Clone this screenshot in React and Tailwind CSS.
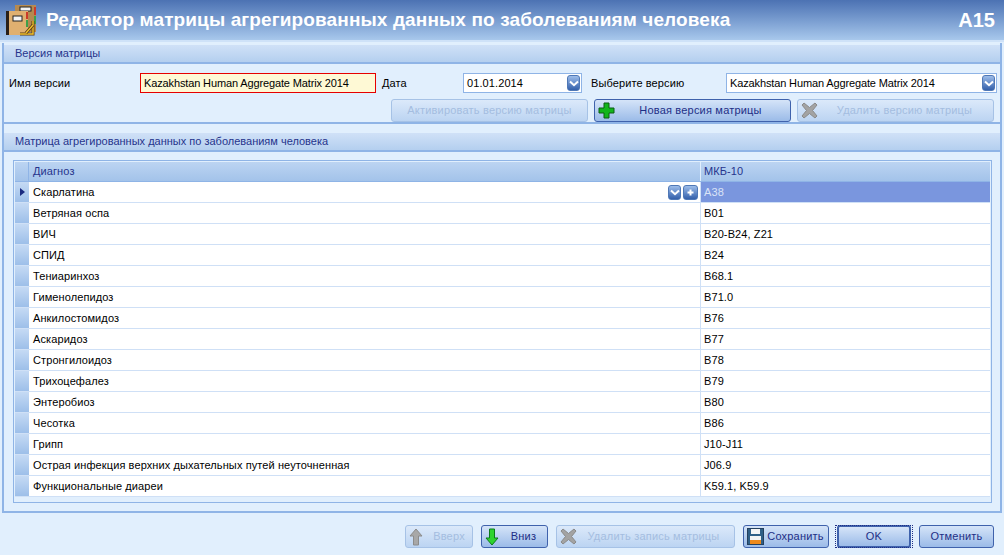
import React from "react";

const rows = [
  ["Скарлатина", "A38"],
  ["Ветряная оспа", "B01"],
  ["ВИЧ", "B20-B24, Z21"],
  ["СПИД", "B24"],
  ["Тениаринхоз", "B68.1"],
  ["Гименолепидоз", "B71.0"],
  ["Анкилостомидоз", "B76"],
  ["Аскаридоз", "B77"],
  ["Стронгилоидоз", "B78"],
  ["Трихоцефалез", "B79"],
  ["Энтеробиоз", "B80"],
  ["Чесотка", "B86"],
  ["Грипп", "J10-J11"],
  ["Острая инфекция верхних дыхательных путей неуточненная", "J06.9"],
  ["Функциональные диареи", "K59.1, K59.9"],
];

const ChevronBox = ({ className }) => (
  <div className={`flex items-center justify-center rounded-[3px] border border-[#4f78b6] bg-gradient-to-b from-[#9dbdea] to-[#3460aa] ${className}`}>
    <svg width="10" height="7" viewBox="0 0 10 7">
      <path d="M1 1.5 L5 5.2 L9 1.5" fill="none" stroke="#fff" strokeWidth="2" />
    </svg>
  </div>
);

const PlusIcon = () => (
  <svg width="17" height="17" viewBox="0 0 17 17">
    <path d="M6 1h5v5h5v5h-5v5H6v-5H1V6h5z" fill="#12b51c" stroke="#0a5c12" strokeWidth="1" />
  </svg>
);

const CrossIcon = () => (
  <svg width="17" height="17" viewBox="0 0 17 17">
    <path d="M3 1 L8.5 5.5 L14 1 L16 3 L11.5 8.5 L16 14 L14 16 L8.5 11.5 L3 16 L1 14 L5.5 8.5 L1 3 Z" fill="#a3a3a3" stroke="#8a8a8a" strokeWidth="1" />
  </svg>
);

const UpIcon = () => (
  <svg width="14" height="18" viewBox="0 0 14 18">
    <path d="M7 1 L13 8 H9.5 V17 H4.5 V8 H1 Z" fill="#a8a8a8" stroke="#8c8c8c" />
  </svg>
);

const DownIcon = () => (
  <svg width="14" height="18" viewBox="0 0 14 18">
    <path d="M7 17 L13 10 H9.5 V1 H4.5 V10 H1 Z" fill="#2fd42f" stroke="#0b7a1a" />
  </svg>
);

const SaveIcon = () => (
  <svg width="17" height="17" viewBox="0 0 17 17">
    <rect x="0.5" y="0.5" width="16" height="16" fill="#2f5f86" stroke="#24405e" />
    <rect x="4" y="1" width="9" height="5" fill="#f4f4f4" />
    <rect x="3" y="8" width="11" height="4" fill="#f2f2f2" />
    <rect x="3" y="12" width="11" height="4" fill="#ef8a1c" />
  </svg>
);

const Btn = ({ children, icon, disabled, className = "", textClass = "" }) => (
  <button
    className={`relative flex h-[23px] items-center justify-center rounded-[3px] border bg-gradient-to-b tracking-[0.2px] ${
      disabled
        ? "border-[#a6c2e6] from-[#dbe9fa] to-[#bcd4f2] text-[#a4bde0]"
        : "border-[#3f62ac] from-[#d5e4f8] to-[#9bbbe8] text-[#1e2f86]"
    } ${className}`}
  >
    {icon && <span className="absolute left-[3px] top-[2px] flex">{icon}</span>}
    <span className={textClass}>{children}</span>
  </button>
);

const Band = ({ children }) => (
  <div className="flex h-[19px] items-center border-b-2 border-[#8fb4e6] bg-gradient-to-b from-[#d0e1f7] to-[#b4cfef] pl-[11px] tracking-normal text-[#26348c]">
    {children}
  </div>
);

const App = () => {
  return (
    <div
      className="flex h-[555px] w-[1004px] flex-col overflow-hidden bg-[#e1effd] text-[11px] tracking-[0.1px] text-black"
      style={{ fontFamily: '"Liberation Sans", Arial, sans-serif' }}
    >
      {/* Title */}
      <div className="flex h-[40px] items-center bg-gradient-to-b from-[#4c72b3] to-[#a8c8ec] pl-[6px] pr-[9px]">
        <svg width="32" height="32" viewBox="0 0 32 32" className="mr-[8px]">
          <rect x="9" y="1" width="21" height="27" fill="#b58a50" />
          <rect x="14" y="3" width="11" height="4" fill="#f2f2f2" stroke="#222" />
          <rect x="28" y="3" width="2" height="8" fill="#cc3a2a" />
          <rect x="28" y="12" width="2" height="8" fill="#3ea04a" />
          <rect x="0" y="7" width="3" height="24" fill="#2a2018" />
          <rect x="3" y="7" width="19" height="24" fill="#e0b070" />
          <rect x="7" y="12" width="9" height="5" fill="#f4f4f4" stroke="#222" />
          <rect x="20" y="8" width="2" height="7" fill="#cc3a2a" />
          <rect x="20" y="16" width="2" height="7" fill="#3ea04a" />
          <path d="M14 30 H27 V17" fill="none" stroke="#5a3a10" strokeWidth="3" />
          <path d="M14 30 H27 V17" fill="none" stroke="#f2c230" strokeWidth="1.4" />
          <path d="M20 29 L27 21" fill="none" stroke="#5a3a10" strokeWidth="3" />
          <path d="M20 29 L27 21" fill="none" stroke="#f2c230" strokeWidth="1.4" />
        </svg>
        <div className="flex-1 text-[19px] font-bold tracking-[0.12px] text-white">
          Редактор матрицы агрегированных данных по заболеваниям человека
        </div>
        <div className="text-[20px] font-bold tracking-normal text-white">A15</div>
      </div>
      <div className="h-[2px] bg-[#cfe2f8]" />

      {/* Panel */}
      <div className="mx-[2px] mb-[12px] mt-[1px] flex h-[470px] flex-col border-x-2 border-b-2 border-[#8fb4e6] pt-[2px]">
        <Band>Версия матрицы</Band>
        <div className="h-[60px] border-b-2 border-[#8fb4e6] pl-[5px] pr-[3px] pt-[9px]">
          <div className="flex h-[20px] items-center">
            <div className="w-[131px]">Имя версии</div>
            <div className="flex h-[20px] w-[236px] items-center border border-[#e60000] bg-[#fef9d5] pl-[3px] tracking-[-0.13px]">
              Kazakhstan Human Aggregate Matrix 2014
            </div>
            <div className="ml-[6px] w-[81px]">Дата</div>
            <div className="flex h-[20px] w-[119px] items-center justify-between border border-[#8fb4e6] bg-white pl-[3px] pr-[1px]">
              <span>01.01.2014</span>
              <ChevronBox className="h-[16px] w-[13px]" />
            </div>
            <div className="ml-[9px] w-[135px]">Выберите версию</div>
            <div className="flex h-[20px] w-[271px] items-center justify-between border border-[#8fb4e6] bg-white pl-[3px] pr-[1px]">
              <span className="tracking-[-0.13px]">Kazakhstan Human Aggregate Matrix 2014</span>
              <ChevronBox className="h-[16px] w-[13px]" />
            </div>
          </div>
          <div className="mt-[6px] flex justify-end gap-[6px] pr-[3px]">
            <Btn disabled className="w-[197px]">Активировать версию матрицы</Btn>
            <Btn icon={<PlusIcon />} className="w-[197px]" textClass="pl-[16px]">Новая версия матрицы</Btn>
            <Btn disabled icon={<CrossIcon />} className="w-[197px]" textClass="pl-[18px]">Удалить версию матрицы</Btn>
          </div>
        </div>

        <div className="mt-[9px]">
          <Band>Матрица агрегированных данных по заболеваниям человека</Band>
        </div>

        {/* Grid */}
        <div className="mb-[8px] ml-[9px] mr-[8px] mt-[8px] flex-1 border border-[#8fb4e6] p-[1px]">
          <div className="grid h-[20px] grid-cols-[14px_672px_1fr] border-b border-[#8fb4e6] bg-gradient-to-b from-[#bcd4f2] to-[#a3c3ea] text-[#26348c]">
            <div className="border-r border-[#8fb4e6]" />
            <div className="flex items-center border-r border-[#e1effd] pl-[4px]">Диагноз</div>
            <div className="flex items-center pl-[3px]">МКБ-10</div>
          </div>
          {rows.map((row, i) => (
            <div key={i} className="grid h-[21px] grid-cols-[14px_672px_1fr] bg-white">
              <div className="flex items-center justify-center border-b border-[#cfe0f6] bg-gradient-to-b from-[#c5daf4] to-[#9dbfe9]">
                {i === 0 && (
                  <svg width="5" height="8" viewBox="0 0 5 8">
                    <path d="M0 0 L5 4 L0 8 Z" fill="#1a2a80" />
                  </svg>
                )}
              </div>
              <div className="flex items-center justify-between border-b border-r border-[#cfe0f6] pl-[4px] pr-[2px]">
                <span>{row[0]}</span>
                {i === 0 && (
                  <span className="flex gap-[2px]">
                    <ChevronBox className="h-[15px] w-[13px]" />
                    <span className="flex h-[15px] w-[15px] items-center justify-center rounded-[3px] border border-[#4f78b6] bg-gradient-to-b from-[#9dbdea] to-[#3460aa]">
                      <svg width="7" height="7" viewBox="0 0 7 7">
                        <path d="M3.5 0.5v6M0.5 3.5h6" stroke="#fff" strokeWidth="2" />
                      </svg>
                    </span>
                  </span>
                )}
              </div>
              <div className={`flex items-center border-b border-[#cfe0f6] pl-[3px] ${i === 0 ? "bg-[#7a96de] text-[#dbe4f7]" : ""}`}>
                {row[1]}
              </div>
            </div>
          ))}
        </div>
      </div>

      {/* Footer */}
      <div className="flex justify-end gap-[8px] pr-[10px]">
        <Btn disabled icon={<UpIcon />} className="w-[68px]" textClass="pl-[20px]">Вверх</Btn>
        <Btn icon={<DownIcon />} className="w-[67px]" textClass="pl-[18px]">Вниз</Btn>
        <Btn disabled icon={<CrossIcon />} className="w-[179px]" textClass="pl-[16px]">Удалить запись матрицы</Btn>
        <Btn icon={<SaveIcon />} className="w-[86px]" textClass="pl-[19px]">Сохранить</Btn>
        <Btn className="w-[74px] border-2 border-[#3f62ac]">
          <span className="block border border-dotted border-[#1e2f86] px-[30px] py-[2px]">OK</span>
        </Btn>
        <Btn className="w-[75px]">Отменить</Btn>
      </div>
    </div>
  );
};

export default App;
